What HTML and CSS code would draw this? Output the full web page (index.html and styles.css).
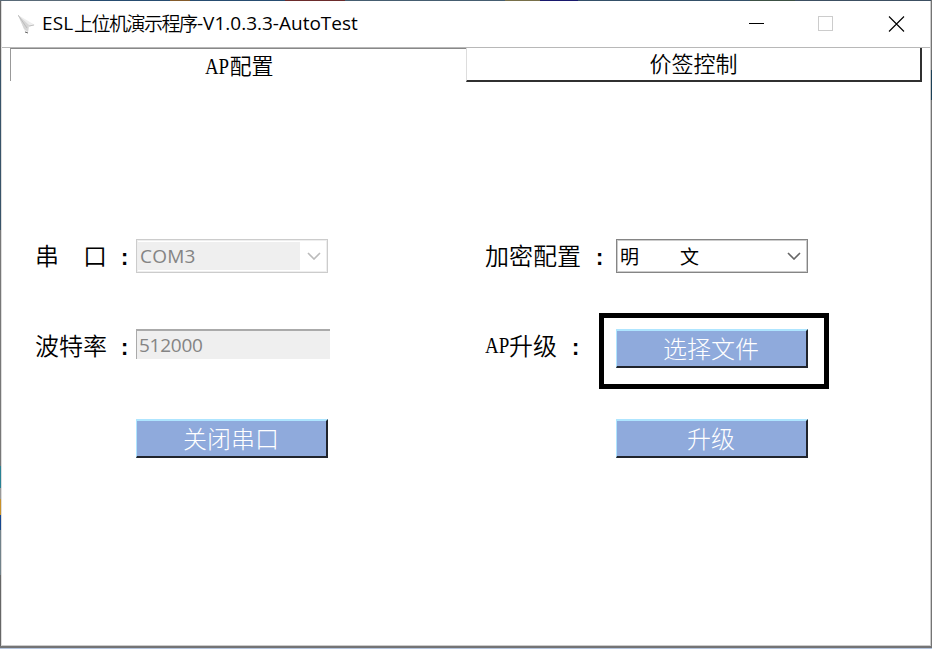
FILE: index.html
```
<!DOCTYPE html>
<html lang="zh-CN">
<head>
<meta charset="utf-8">
<title>ESL上位机演示程序</title>
<link rel="stylesheet" href="styles.css">
</head>
<body>
<div class="desktop">
<main class="window">
  <header class="titlebar">
    <svg class="app-icon" width="18" height="20" viewBox="0 0 18 20"><path d="M0 0L17 10L11 12L10 18L7 17L6 14Z" fill="#eee"/><path d="M0 0L11 10L10 17L6 14Z" fill="#d6d6d6"/><path d="M0 0L9 13M11 11l5-1" stroke="#b5b5b5" stroke-width=".8" fill="none"/><path d="M7 17l3 1" stroke="#666"/></svg>
    <h1 class="title"><span class="t-a">ESL</span><span class="t-b">上位机演示程序</span><span class="t-c">-V1.0.3.3-AutoTest</span></h1>
    <svg class="controls" width="156" height="16" viewBox="0 0 156 16" fill="none" shape-rendering="crispEdges"><path d="M0 7.5h15" stroke="#000"/><rect x="69.5" y=".5" width="14" height="14" stroke="#ccc"/><path d="M140 .5l15 15M155 .5l-15 15" stroke="#000" shape-rendering="auto" stroke-width="1.1"/></svg>
  </header>
  <nav class="tabs">
    <div class="tab active"><span class="latin">AP</span>配置</div>
    <div class="tab idle">价签控制</div>
  </nav>
  <section class="form">
    <div class="column left">
      <div class="row"><label class="label">串<i class="gap wide"></i>口<i class="gap"></i><b class="colon">:</b></label>
        <div class="select disabled"><span class="value">COM3</span><svg class="chevron" width="14" height="8" viewBox="0 0 14 8"><path d="M1 1l6 6l6-6"/></svg></div></div>
      <div class="row"><label class="label">波特率<i class="gap"></i><b class="colon">:</b></label><div class="input">512000</div></div>
      <div class="row action"><button class="button">关闭串口</button></div>
    </div>
    <div class="column right">
      <div class="row"><label class="label">加密配置<i class="gap"></i><b class="colon">:</b></label>
        <div class="select"><span class="value cjk"><span>明</span><span>文</span></span><svg class="chevron" width="14" height="8" viewBox="0 0 14 8"><path d="M1 1l6 6l6-6"/></svg></div></div>
      <div class="row"><label class="label"><span class="latin">AP</span>升级<i class="gap"></i><b class="colon">:</b></label><div class="highlight"><button class="button">选择文件</button></div></div>
      <div class="row action"><button class="button">升级</button></div>
    </div>
  </section>
</main>
</div>
</body>
</html>
```
FILE: styles.css
```
* { box-sizing: border-box; }
body { margin: 0; width: 934px; height: 649px; overflow: hidden; background: #fff; font-family: "Noto Sans CJK SC", sans-serif; font-weight: 350; color: #000; }
.desktop {
  width: 932px; height: 649px; padding: 1px 1px 3px 1px;
  background:
    linear-gradient(#b4c5df, #b4c5df) 0 100% / 100% 1px no-repeat,
    linear-gradient(#747474, #747474) 0 646px / 100% 2px no-repeat,
    linear-gradient(#747474 0 70px, #1c4056 70px 100px, #747474 100px) 100% 0 / 1px 100% no-repeat,
    linear-gradient(90deg, #596a78 0 90px, #264c70 90px 170px, #845b2b 170px 190px, #264c70 190px 285px, #6b2b2b 285px 345px, #455d70 345px 505px, #78704a 505px 540px, #18186d 540px 578px, #345068 578px 750px, #3c5144 750px 795px, #3c4f62 795px) 0 0 / 100% 1px no-repeat,
    linear-gradient(#656565 0 60px, #385369 60px 230px, #777 230px 466px, #288294 466px 488px, #999 488px 499px, #c99128 499px 515px, #16478f 515px 530px, #71828a 530px 575px, #666 575px);
}
.window { height: 645px; background: #fff; border-left: 1px solid #ddd; border-right: 1px solid #ccc; border-bottom: 1px solid #ccc; }
.titlebar { display: flex; height: 47px; padding: 0 25px 0 16px; align-items: center; border-bottom: 1px solid #b8b8b8; }
.app-icon { margin-top: 1px; }
.title { display: flex; align-items: center; margin: -2px auto 0 6px; font-size: 19px; line-height: 28px; font-weight: 400; white-space: nowrap; }
.t-a, .t-c { font-family: "Open Sans", sans-serif; }
.t-a { width: 32px; letter-spacing: .1px; }
.t-b { width: 123px; font-size: 19px; font-weight: 350; letter-spacing: -1.5px; }
.t-c { letter-spacing: 0; }
.tabs { display: flex; height: 34px; padding-left: 8px; }
.tab { width: 456px; font-size: 22px; line-height: 28px; text-align: center; }
.active { padding-left: 2px; border-top: 1px solid #888; border-left: 1px solid #999; line-height: 30px; height: 33px; }
.idle { border-right: 2px solid #303030; border-bottom: 2px solid #303030; border-left: 1px solid #ddd; }
.latin { display: inline-block; width: 24px; font-family: "Liberation Serif", serif; font-weight: 400; font-kerning: none; transform: scaleX(.79); transform-origin: 0 50%; text-align: left; white-space: nowrap; }
.tab .latin { font-size: 23px; transform: scaleX(.82); }
.form { display: grid; grid-template-columns: 449px 1fr; padding: 147px 0 0 33px; }
.column { display: grid; grid-template-rows: 90px 90px 90px; }
.row { display: flex; align-items: flex-start; padding-top: 10px; }
.label { display: flex; width: 101px; height: 34px; align-items: center; padding-bottom: 2px; font-size: 24px; line-height: 32px; white-space: nowrap; }
.right .label { width: 132px; padding-left: 1px; }
.gap { width: 12px; }
.wide { width: 24px; }
.colon { width: 12px; padding-top: 9px; text-align: center; font: 700 22px/30px "Liberation Mono", monospace; }
.left .colon { margin-left: -1px; }
.select { display: flex; width: 192px; height: 34px; padding: 1px 6px 1px 1px; align-items: center; justify-content: space-between; border: 1px solid #858585; box-shadow: inset 0 0 0 1px #ccc; }
.disabled { border-color: #ccc; box-shadow: inset 0 0 0 1px #eee; }
.value { width: 162px; height: 28px; padding-left: 2px; font: 400 19px/28px "Open Sans", sans-serif; letter-spacing: .2px; }
.disabled .value { background: #efefef; color: #848484; }
.cjk { display: flex; gap: 41px; font-family: "Noto Sans CJK SC", sans-serif; letter-spacing: 0; }
.chevron { fill: none; stroke: #666; stroke-width: 1.6; }
.disabled .chevron { stroke: #bbb; }
.input { width: 194px; height: 30px; padding-left: 2px; border-top: 2px solid #aaa; border-left: 1px solid #aaa; background: #efefef; color: #848484; font: 400 19px/28px "Open Sans", sans-serif; letter-spacing: -.25px; }
.button { display: block; width: 192px; height: 39px; padding: 0 1px 2px 0; border: 2px solid; border-color: #aee5ff #20242c #20242c #aee5ff; border-width: 2px 2px 2px 1px; background: #8faadc; color: #fff; font: 300 24px/32px "Noto Sans CJK SC", sans-serif; text-align: center; }
.left .action { padding-left: 101px; }
.right .action { padding-left: 132px; }
.highlight { width: 230px; height: 76px; margin: -16px 0 0 -17px; padding: 11px 12px; border: 5px solid #000; }
```
